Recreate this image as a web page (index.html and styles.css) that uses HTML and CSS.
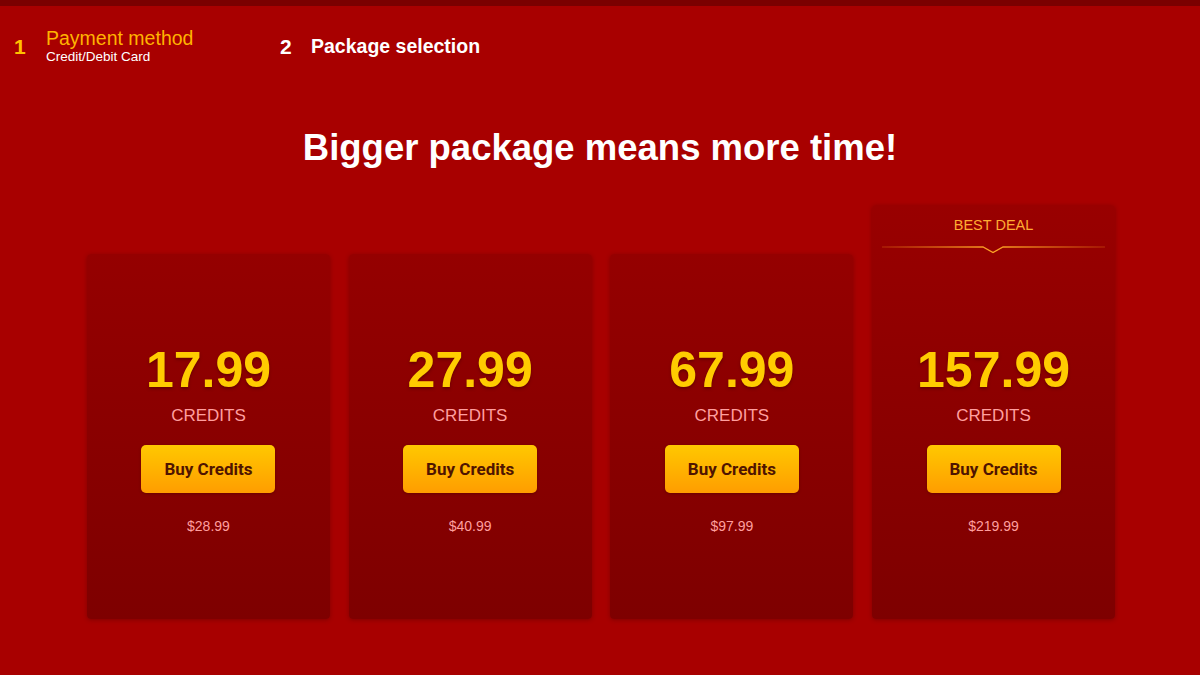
FILE: index.html
```html
<!DOCTYPE html>
<html>
<head>
<meta charset="utf-8">
<link rel="stylesheet" href="styles.css">
</head>
<body>
<div class="topbar"></div>
<div class="steps">
  <div class="step step-done">
    <span class="step-num">1</span>
    <div class="step-text">
      <div class="step-title">Payment method</div>
      <div class="step-sub">Credit/Debit Card</div>
    </div>
  </div>
  <div class="step step-active">
    <span class="step-num">2</span>
    <div class="step-text">
      <div class="step-title">Package selection</div>
    </div>
  </div>
</div>
<h1 class="heading">Bigger package means more time!</h1>
<div class="cards">
  <div class="card">
    <div class="amount">17.99</div>
    <div class="unit">CREDITS</div>
    <button class="buy">Buy Credits</button>
    <div class="price">$28.99</div>
  </div>
  <div class="card">
    <div class="amount">27.99</div>
    <div class="unit">CREDITS</div>
    <button class="buy">Buy Credits</button>
    <div class="price">$40.99</div>
  </div>
  <div class="card">
    <div class="amount">67.99</div>
    <div class="unit">CREDITS</div>
    <button class="buy">Buy Credits</button>
    <div class="price">$97.99</div>
  </div>
  <div class="card card-best">
    <div class="best-head">
      <div class="best-label">BEST DEAL</div>
      <svg class="best-line" width="223" height="8" viewBox="0 0 223 8">
        <defs>
          <linearGradient id="lg" x1="0" x2="1" y1="0" y2="0">
            <stop offset="0" stop-color="#ff9a1a" stop-opacity="0.2"/>
            <stop offset="0.5" stop-color="#ffa726" stop-opacity="1"/>
            <stop offset="1" stop-color="#ff9a1a" stop-opacity="0.2"/>
          </linearGradient>
        </defs>
        <polyline points="0,1 101,1 111,6.5 121,1 223,1" fill="none" stroke="url(#lg)" stroke-width="1.3"/>
      </svg>
    </div>
    <div class="amount">157.99</div>
    <div class="unit">CREDITS</div>
    <button class="buy">Buy Credits</button>
    <div class="price">$219.99</div>
  </div>
</div>
</body>
</html>
```
FILE: styles.css
```css
html, body {
  margin: 0;
  padding: 0;
}
body {
  width: 1200px;
  height: 675px;
  overflow: hidden;
  background: #a80000;
  font-family: "Liberation Sans", Arial, sans-serif;
  color: #fff;
}
.topbar {
  height: 6px;
  background: #7a0000;
}
.steps {
  display: flex;
  align-items: flex-start;
  padding: 22px 0 0 14px;
  height: 44px;
}
.step {
  display: flex;
  align-items: flex-start;
}
.step-num {
  font-weight: bold;
  font-size: 21px;
  line-height: 22px;
  margin-top: 8px;
  width: 32px;
}
.step-done .step-num {
  color: #ffc000;
}
.step-done .step-title {
  color: #ffb300;
  font-size: 19.5px;
  line-height: 20px;
}
.step-sub {
  font-size: 13.5px;
  line-height: 15px;
  margin-top: 1px;
  color: #fff;
}
.step-done {
  width: 266px;
}
.step-active .step-num {
  color: #fff;
  width: 31px;
}
.step-active .step-title {
  color: #fff;
  font-weight: bold;
  font-size: 19.5px;
  line-height: 22px;
  margin-top: 7px;
}
.heading {
  margin: 56px 0 0 0;
  text-align: center;
  font-size: 36.5px;
  line-height: 40px;
  font-weight: bold;
  color: #fff;
}
.cards {
  display: flex;
  justify-content: center;
  align-items: flex-end;
  gap: 18.7px;
  margin-top: 37px;
  padding-left: 2px;
}
.card {
  width: 243px;
  height: 365px;
  border-radius: 4px;
  background: linear-gradient(180deg, #950000 0%, #7e0000 100%);
  box-shadow: 0 1px 4px rgba(60, 0, 0, 0.35);
  display: flex;
  flex-direction: column;
  align-items: center;
  padding-top: 88px;
  box-sizing: border-box;
}
.card-best {
  height: 414px;
  padding-top: 10px;
  background: linear-gradient(180deg, #990000 0%, #7e0000 100%);
}
.best-head {
  display: flex;
  flex-direction: column;
  align-items: center;
  height: 127px;
}
.best-label {
  font-size: 14.5px;
  line-height: 20px;
  color: #ffad33;
}
.best-line {
  display: block;
  margin-top: 11px;
}
.amount {
  font-family: "Liberation Sans", Arial, sans-serif;
  font-weight: bold;
  font-size: 50px;
  line-height: 56px;
  color: #ffcc00;
  text-shadow: 0 2px 3px rgba(70, 0, 0, 0.5);
}
.unit {
  font-size: 17px;
  line-height: 20px;
  margin-top: 8px;
  color: #ff9f9f;
}
.buy {
  margin-top: 19px;
  width: 134px;
  height: 48px;
  border: none;
  border-radius: 5px;
  background: linear-gradient(180deg, #ffc800 0%, #ff9d00 100%);
  box-shadow: 0 1px 3px rgba(60, 0, 0, 0.4);
  font-family: Roboto, "Liberation Sans", sans-serif;
  font-weight: bold;
  font-size: 17px;
  color: #4f1400;
  padding: 0;
}
.price {
  margin-top: 24px;
  font-size: 14px;
  line-height: 18px;
  color: #ff9f9f;
}
```
